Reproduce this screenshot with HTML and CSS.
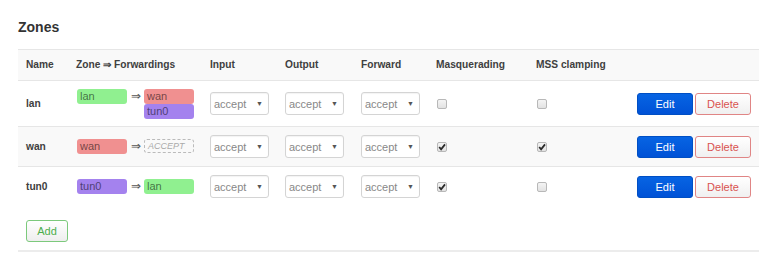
FILE: index.html
```html
<!DOCTYPE html>
<html>
<head>
<meta charset="utf-8">
<link rel="stylesheet" href="styles.css">
</head>
<body>
<div class="page">
  <h2 class="title">Zones</h2>
  <table class="zones">
    <colgroup>
      <col class="c-name"><col class="c-zone"><col class="c-in"><col class="c-out"><col class="c-fwd"><col class="c-masq"><col class="c-mss"><col class="c-act">
    </colgroup>
    <thead>
      <tr class="head">
        <th>Name</th><th>Zone ⇒ Forwardings</th><th>Input</th><th>Output</th><th>Forward</th><th>Masquerading</th><th>MSS clamping</th><th></th>
      </tr>
    </thead>
    <tbody>
      <tr class="row r1">
        <td class="name">lan</td>
        <td><div class="fw"><span class="zb lan">lan</span><span class="arrow">⇒</span><div class="stack"><span class="zb wan">wan</span><span class="zb tun">tun0</span></div></div></td>
        <td><div class="sel"><span>accept</span><span class="caret">▼</span></div></td>
        <td><div class="sel"><span>accept</span><span class="caret">▼</span></div></td>
        <td><div class="sel"><span>accept</span><span class="caret">▼</span></div></td>
        <td><span class="cb"></span></td>
        <td><span class="cb"></span></td>
        <td><div class="acts"><button class="btn edit">Edit</button><button class="btn del">Delete</button></div></td>
      </tr>
      <tr class="row r2">
        <td class="name">wan</td>
        <td><div class="fw"><span class="zb wan">wan</span><span class="arrow">⇒</span><span class="zb none">ACCEPT</span></div></td>
        <td><div class="sel"><span>accept</span><span class="caret">▼</span></div></td>
        <td><div class="sel"><span>accept</span><span class="caret">▼</span></div></td>
        <td><div class="sel"><span>accept</span><span class="caret">▼</span></div></td>
        <td><span class="cb on"><svg viewBox="0 0 10 10" width="10" height="10"><path d="M2.2 5 L4.1 7.3 L8 2.4" fill="none" stroke="#2a2a2a" stroke-width="1.8"/></svg></span></td>
        <td><span class="cb on"><svg viewBox="0 0 10 10" width="10" height="10"><path d="M2.2 5 L4.1 7.3 L8 2.4" fill="none" stroke="#2a2a2a" stroke-width="1.8"/></svg></span></td>
        <td><div class="acts"><button class="btn edit">Edit</button><button class="btn del">Delete</button></div></td>
      </tr>
      <tr class="row r3">
        <td class="name">tun0</td>
        <td><div class="fw"><span class="zb tun">tun0</span><span class="arrow">⇒</span><span class="zb lan">lan</span></div></td>
        <td><div class="sel"><span>accept</span><span class="caret">▼</span></div></td>
        <td><div class="sel"><span>accept</span><span class="caret">▼</span></div></td>
        <td><div class="sel"><span>accept</span><span class="caret">▼</span></div></td>
        <td><span class="cb on"><svg viewBox="0 0 10 10" width="10" height="10"><path d="M2.2 5 L4.1 7.3 L8 2.4" fill="none" stroke="#2a2a2a" stroke-width="1.8"/></svg></span></td>
        <td><span class="cb"></span></td>
        <td><div class="acts"><button class="btn edit">Edit</button><button class="btn del">Delete</button></div></td>
      </tr>
    </tbody>
  </table>
  <div class="addbar"><button class="btn add">Add</button></div>
  <div class="bottom"></div>
</div>
</body>
</html>
```
FILE: styles.css
```css
html, body { margin: 0; padding: 0; background: #fff; }
body { font-family: "Liberation Sans", Arial, sans-serif; color: #404040; }
.page { width: 741px; margin-left: 18px; }
.title { margin: 0; padding-top: 19px; height: 30px; font-size: 14px; line-height: 17px; font-weight: bold; color: #333; box-sizing: content-box; }
.zones { width: 741px; border-collapse: collapse; table-layout: fixed; }
.c-name { width: 50px; } .c-zone { width: 134px; } .c-in { width: 75px; } .c-out { width: 76px; }
.c-fwd { width: 75px; } .c-masq { width: 100px; } .c-mss { width: 100px; } .c-act { width: 131px; }
th, td { padding: 0 8px; text-align: left; vertical-align: middle; }
.head { background: #f9f9f9; border-top: 1px solid #e6e6e6; border-bottom: 1px solid #e6e6e6; height: 31px; }
.head th { font-size: 10.2px; font-weight: bold; color: #404040; padding-bottom: 2px; }
.row { height: 46px; }
.r1 { height: 46px; border-bottom: 1px solid #e6e6e6; }
.r2 { height: 40px; border-bottom: 1px solid #e6e6e6; background: #f9f9f9; }
.r3 { height: 40px; }
.name { font-size: 10.2px; font-weight: bold; color: #404040; }
.fw { display: flex; align-items: flex-start; margin-left: 1px; }
.stack { display: flex; flex-direction: column; }
.zb { display: block; width: 50px; height: 15px; box-sizing: border-box; border-radius: 3px; font-size: 11px; line-height: 15px; padding-left: 3px; color: rgba(0,0,0,0.55); }
.lan { background: #90f090; }
.wan { background: #f09090; }
.tun { background: #a482ee; }
.none { border: 1px dashed #bbb; color: #aaa; font-style: italic; font-size: 9px; line-height: 13px; height: 14px; padding-left: 3px; }
.arrow { width: 17px; text-align: center; font-size: 12px; line-height: 14px; color: #555; }
.sel { width: 59px; height: 23px; box-sizing: border-box; border: 1px solid #d4d4d4; border-radius: 3px; background: #fff; display: flex; align-items: center; justify-content: space-between; padding: 0 5px 0 3px; font-size: 11px; color: #888; box-shadow: inset 0 1px 1px rgba(0,0,0,0.05); }
.caret { font-size: 7px; color: #555; }
.cb { display: block; width: 10px; height: 10px; box-sizing: border-box; border: 1px solid #b8b8b8; border-radius: 2px; background: linear-gradient(#f4f4f4, #e2e2e2); margin-left: 1px; position: relative; }
.cb svg { position: absolute; left: -1px; top: -1px; }
.acts { display: flex; justify-content: flex-end; gap: 2px; }
.btn { font-family: "Liberation Sans", Arial, sans-serif; font-size: 11px; height: 22px; border-radius: 3px; padding: 0; cursor: pointer; }
.edit { width: 56px; background: linear-gradient(#0764e3, #0052d6); border: 1px solid #004fc4; color: #fff; }
.del { width: 56px; background: linear-gradient(#fff, #f0f0f0); border: 1px solid #e08585; color: #d9534f; }
.addbar { padding: 13px 0 0 8px; height: 30px; }
.add { width: 42px; background: linear-gradient(#fff, #eee); border: 1px solid #7cc97c; color: #4cae4c; }
.bottom { height: 2px; background: #ececec; }
```
